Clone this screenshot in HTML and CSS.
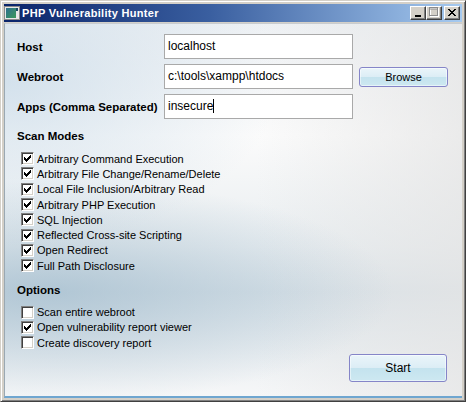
FILE: index.html
```html
<!DOCTYPE html>
<html>
<head>
<meta charset="utf-8">
<link rel="stylesheet" href="styles.css">
</head>
<body>
<div class="window">
  <div class="titlebar">
    <svg class="app-icon" width="16" height="16" viewBox="0 0 16 16">
      <rect x="0.5" y="1.5" width="15" height="13" fill="#e8e8e8" stroke="#8a8a8a"/>
      <defs><linearGradient id="ig" x1="0" y1="0" x2="1" y2="1"><stop offset="0" stop-color="#2f6f8f"/><stop offset="1" stop-color="#3a9a5a"/></linearGradient></defs>
      <rect x="2" y="3" width="10" height="10" fill="url(#ig)"/>
      <rect x="12" y="3" width="2" height="3" fill="#1d4a66"/>
    </svg>
    <span class="title">PHP Vulnerability Hunter</span>
    <div class="caption-buttons">
      <span class="cbtn"><svg width="14" height="12" viewBox="0 0 14 12"><rect x="4" y="8" width="6" height="2" fill="#000"/></svg></span>
      <span class="cbtn"><svg width="14" height="12" viewBox="0 0 14 12"><rect x="3.5" y="1.5" width="8" height="8" fill="none" stroke="#fff"/><rect x="2.5" y="0.5" width="8" height="8" fill="none" stroke="#8c8c8c"/><rect x="2.5" y="1.5" width="8" height="1" fill="#8c8c8c"/></svg></span>
      <span class="cbtn gap"><svg width="14" height="12" viewBox="0 0 14 12"><path d="M3 2 L10 9 M4 2 L11 9 M10 2 L3 9 M11 2 L4 9" stroke="#000" stroke-width="1"/></svg></span>
    </div>
  </div>
  <div class="client">
    <div class="form">
      <label class="lbl">Host</label>
      <div class="field">localhost</div>
      <div></div>
      <label class="lbl">Webroot</label>
      <div class="field">c:\tools\xampp\htdocs</div>
      <button class="btn browse">Browse</button>
      <label class="lbl">Apps (Comma Separated)</label>
      <div class="field">insecure<span class="caret"></span></div>
      <div></div>
    </div>

    <div class="heading">Scan Modes</div>
    <ul class="checks">
      <li><span class="cb on"></span>Arbitrary Command Execution</li>
      <li><span class="cb on"></span>Arbitrary File Change/Rename/Delete</li>
      <li><span class="cb on"></span>Local File Inclusion/Arbitrary Read</li>
      <li><span class="cb on"></span>Arbitrary PHP Execution</li>
      <li><span class="cb on"></span>SQL Injection</li>
      <li><span class="cb on"></span>Reflected Cross-site Scripting</li>
      <li><span class="cb on"></span>Open Redirect</li>
      <li><span class="cb on"></span>Full Path Disclosure</li>
    </ul>

    <div class="heading options">Options</div>
    <ul class="checks opts">
      <li><span class="cb"></span>Scan entire webroot</li>
      <li><span class="cb on"></span>Open vulnerability report viewer</li>
      <li><span class="cb"></span>Create discovery report</li>
    </ul>

    <div class="spacer"></div>
    <div class="actions">
      <button class="btn start">Start</button>
    </div>
  </div>
</div>
</body>
</html>
```

FILE: styles.css
```css
* { box-sizing: border-box; }
html, body { margin: 0; padding: 0; background: #d4d0c8; }
body { font-family: Tahoma, "Liberation Sans", Arial, sans-serif; font-size: 11px; color: #000; }

.window {
  width: 466px;
  height: 402px;
  display: flex;
  flex-direction: column;
  background: #d4d0c8;
  border-top: 1px solid #d4d0c8;
  border-left: 1px solid #d4d0c8;
  border-right: 1px solid #404040;
  border-bottom: 1px solid #404040;
  box-shadow: inset 1px 1px 0 #fff, inset -1px -1px 0 #808080;
  padding: 3px;
}

.titlebar {
  height: 18px;
  flex: none;
  display: flex;
  align-items: center;
  background: linear-gradient(to right, #0a246a 0%, #3a5fa0 45%, #a6caf0 100%);
  padding: 0 2px 0 0;
}
.app-icon { margin: 0 2px 0 0; flex: none; }
.title {
  color: #fff;
  font-weight: bold;
  font-size: 11px;
  font-family: Tahoma, "Liberation Sans", sans-serif;
  letter-spacing: 0.3px;
  flex: 1;
}
.caption-buttons { display: flex; }
.cbtn {
  width: 16px;
  height: 14px;
  background: #d4d0c8;
  border-top: 1px solid #fff;
  border-left: 1px solid #fff;
  border-right: 1px solid #404040;
  border-bottom: 1px solid #404040;
  box-shadow: inset -1px -1px 0 #808080;
  display: flex;
  align-items: center;
  justify-content: center;
}
.cbtn svg { display: block; }
.cbtn.gap { margin-left: 2px; }

.client {
  flex: 1;
  margin-top: 1px;
  display: flex;
  flex-direction: column;
  padding: 10px 15px 14px 12px;
  border-left: 1px solid #9aa8b2;
  border-top: 1px solid #c8ccd0;
  border-bottom: 2px solid #6fa6d0;
  background:
    radial-gradient(ellipse 75% 30% at 10% 72%, rgba(150,180,200,0.6), rgba(150,180,200,0) 100%),
    radial-gradient(ellipse 60% 45% at 0% 15%, rgba(200,218,232,0.75), rgba(200,218,232,0) 100%),
    linear-gradient(to right, rgba(255,255,255,0) 55%, rgba(228,228,228,0.7) 100%),
    linear-gradient(to bottom, #eef1f4 0%, #fbfbfb 30%, #e8edf0 60%, #d9e2e8 72%, #f6f7f8 100%);
}

.form {
  display: grid;
  grid-template-columns: 141px 189px 89px;
  grid-auto-rows: 25px;
  column-gap: 6px;
  row-gap: 5px;
  align-items: center;
}
.lbl {
  font-weight: bold;
  font-size: 11.5px;
}
.field {
  height: 25px;
  background: #fff;
  border: 1px solid #a9a9a9;
  padding: 0 4px 0 3px;
  line-height: 23px;
  font-size: 12px;
}
.caret {
  display: inline-block;
  width: 1px;
  height: 14px;
  background: #000;
  vertical-align: -3px;
}

.btn {
  font-family: Tahoma, "Liberation Sans", sans-serif;
  font-size: 11px;
  color: #000;
  border: 1px solid #8585c8;
  border-radius: 3px;
  background: linear-gradient(to bottom, #eaf5fa 0%, #dcedf5 50%, #c4e3ee 51%, #cde8f1 100%);
  padding: 0;
  box-shadow: inset 0 0 0 1px rgba(255,255,255,0.5);
}
.browse { width: 89px; height: 20px; }

.heading {
  font-weight: bold;
  font-size: 11.5px;
  margin-top: 10px;
  height: 14px;
  line-height: 14px;
}
.heading.options { margin-top: 10px; }

.checks {
  list-style: none;
  margin: 8px 0 0 0;
  padding: 0 0 0 4px;
}
.checks.opts { margin-top: 7px; }
.checks li {
  height: 15.3px;
  display: flex;
  align-items: center;
  font-size: 11px;
}
.cb {
  width: 13px;
  height: 13px;
  flex: none;
  margin-right: 3px;
  background: #fff;
  border-top: 1px solid #808080;
  border-left: 1px solid #808080;
  border-right: 1px solid #fff;
  border-bottom: 1px solid #fff;
  box-shadow: inset 1px 1px 0 #404040, inset -1px -1px 0 #d4d0c8;
  position: relative;
}
.cb.on::after {
  content: "";
  position: absolute;
  left: 2px;
  top: 2px;
  width: 7px;
  height: 7px;
  background: url("data:image/svg+xml;utf8,<svg xmlns='http://www.w3.org/2000/svg' width='7' height='7' viewBox='0 0 7 7'><path d='M0 2h1v3h-1zM1 3h1v3h-1zM2 4h1v3h-1zM3 3h1v3h-1zM4 2h1v3h-1zM5 1h1v3h-1zM6 0h1v3h-1z' fill='black'/></svg>") no-repeat;
}

.spacer { flex: 1; }
.actions { display: flex; justify-content: flex-end; }
.start { width: 98px; height: 28px; font-size: 12px; }
```
